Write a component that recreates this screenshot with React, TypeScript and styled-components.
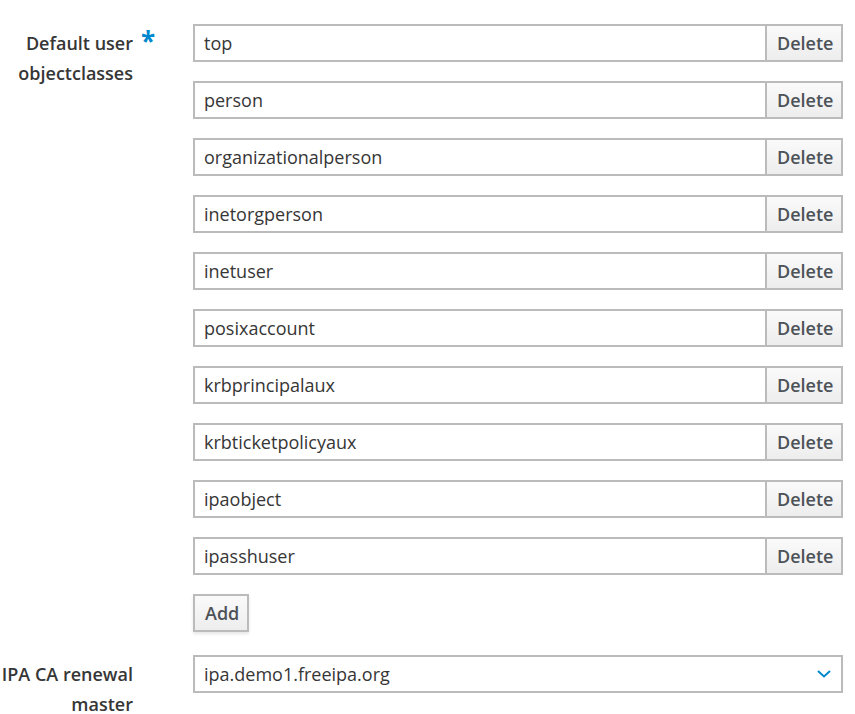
import React from "react";
import styled, { createGlobalStyle } from "styled-components";

const GlobalStyle = createGlobalStyle`
  html, body {
    margin: 0;
    padding: 0;
    background: #ffffff;
    font-family: "Open Sans", "Liberation Sans", sans-serif;
    color: #363636;
  }
  * { box-sizing: border-box; }
`;

const Page = styled.div`
  width: 855px;
  padding-top: 24px;
`;

const FieldRow = styled.div<{ $gapAfter?: number }>`
  display: grid;
  grid-template-columns: 193px 650px;
  margin-bottom: ${(p) => p.$gapAfter ?? 0}px;
`;

const LabelCell = styled.div`
  position: relative;
  padding-right: 60px;
  padding-top: 5px;
  text-align: right;
`;

const LabelText = styled.label`
  display: inline-block;
  font-size: 18px;
  font-weight: 600;
  line-height: 29.5px;
  color: #363636;
`;

const RequiredMark = styled.span`
  position: absolute;
  left: 141px;
  top: 1px;
  font-size: 26px;
  font-weight: 700;
  line-height: 32px;
  color: #0088ce;
`;

const Values = styled.div`
  display: flex;
  flex-direction: column;
  gap: 19px;
`;

const InputGroup = styled.div`
  display: flex;
  height: 38px;
`;

const TextInput = styled.input`
  flex: 1;
  min-width: 0;
  height: 38px;
  border: 2px solid #bbbbbb;
  border-right-width: 1px;
  padding: 0 9px;
  font-family: inherit;
  font-size: 18px;
  color: #363636;
  background: #ffffff;
  outline: none;
`;

const Button = styled.button<{ $attached?: boolean }>`
  height: 38px;
  padding: 0 10px;
  width: ${(p) => (p.$attached ? "77px" : "56px")};
  border: 2px solid #bbbbbb;
  ${(p) => (p.$attached ? "border-left-width: 1px;" : "")}
  background: linear-gradient(to bottom, #fafafa 0%, #ededed 100%);
  font-family: inherit;
  font-size: 18px;
  font-weight: 600;
  color: #4d5258;
  cursor: pointer;
  box-shadow: ${(p) => (p.$attached ? "none" : "0 2px 3px rgba(3,3,3,0.1)")};
`;

const Select = styled.div`
  display: flex;
  align-items: center;
  justify-content: space-between;
  height: 38px;
  border: 2px solid #bbbbbb;
  padding: 0 10px 0 9px;
  font-size: 18px;
  color: #363636;
  background: #ffffff;
`;

const Chevron = () => (
  <svg width="14" height="8" viewBox="0 0 14 8" fill="none">
    <path d="M1 1 L7 6.5 L13 1" stroke="#0088ce" strokeWidth="2" />
  </svg>
);

const classes = [
  "top",
  "person",
  "organizationalperson",
  "inetorgperson",
  "inetuser",
  "posixaccount",
  "krbprincipalaux",
  "krbticketpolicyaux",
  "ipaobject",
  "ipasshuser",
];

export default function App() {
  return (
    <Page>
      <GlobalStyle />
      <FieldRow $gapAfter={23}>
        <LabelCell>
          <LabelText>Default user objectclasses</LabelText>
          <RequiredMark>*</RequiredMark>
        </LabelCell>
        <Values>
          {classes.map((c) => (
            <InputGroup key={c}>
              <TextInput defaultValue={c} />
              <Button $attached>Delete</Button>
            </InputGroup>
          ))}
          <div>
            <Button>Add</Button>
          </div>
        </Values>
      </FieldRow>
      <FieldRow>
        <LabelCell>
          <LabelText>IPA CA renewal master</LabelText>
        </LabelCell>
        <Select>
          <span>ipa.demo1.freeipa.org</span>
          <Chevron />
        </Select>
      </FieldRow>
    </Page>
  );
}
